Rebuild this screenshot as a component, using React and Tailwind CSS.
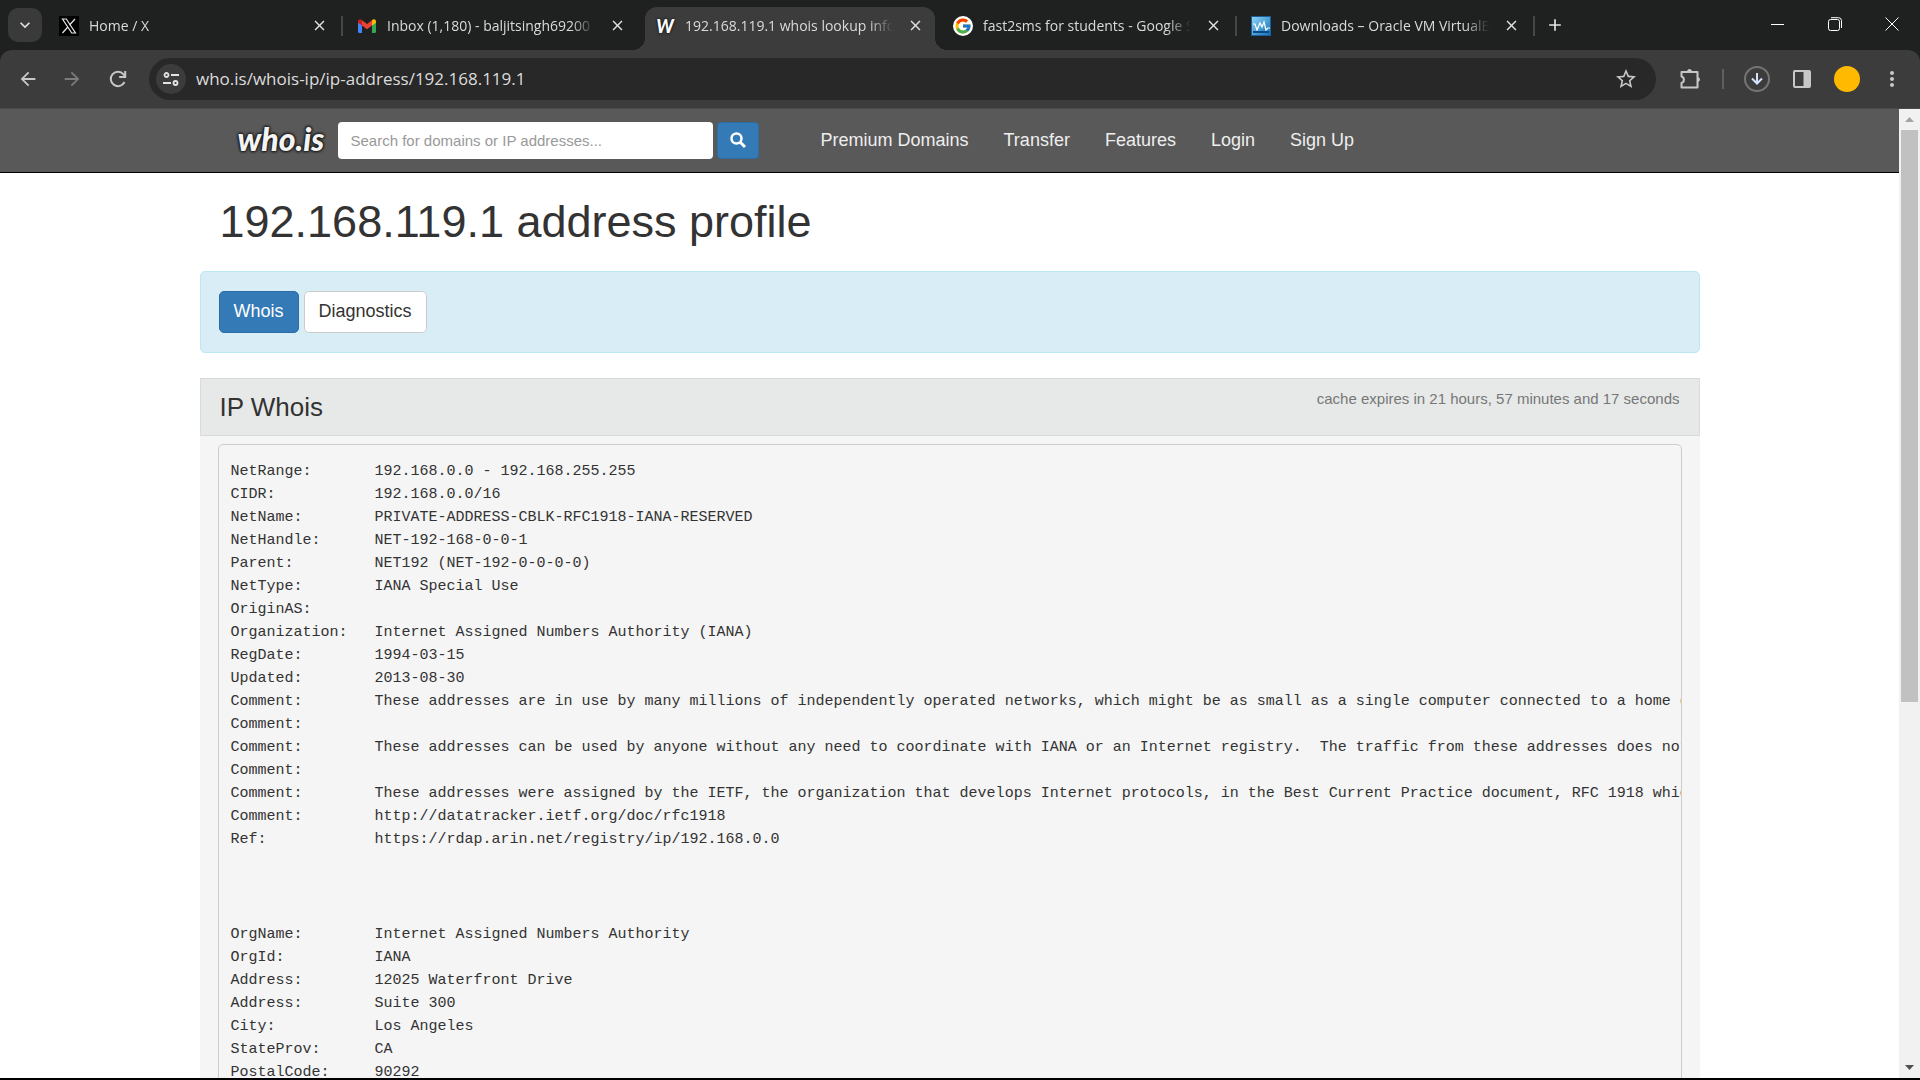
import React from "react";
import { FcGoogle } from "react-icons/fc";
import { MdArrowBack, MdArrowForward, MdRefresh, MdStarBorder, MdMoreVert, MdClose, MdAdd, MdKeyboardArrowDown } from "react-icons/md";

const XIcon = () => (
  <svg viewBox="0 0 20 20" className="size-5 shrink-0">
    <rect width="20" height="20" fill="#000" />
    <path d="M3.5 3h3.8l9.2 14h-3.8z" fill="none" stroke="#e7e7e7" strokeWidth="1.2" />
    <path d="M16 3l-5.5 6M8.8 11L3.5 17" stroke="#e7e7e7" strokeWidth="1.2" />
  </svg>
);

const GmailIcon = () => (
  <svg viewBox="0 0 20 20" className="size-5 shrink-0">
    <path d="M1 5v10.500a1.500 1.500 0 0 0 1.500 1.500H5V8z" fill="#4285f4" />
    <path d="M19 5v10.500a1.500 1.500 0 0 1-1.500 1.500H15V8z" fill="#34a853" />
    <path d="M15 4.200c1.600-1.600 4-.8 4 1.500v1L15 9.600z" fill="#fbbc04" />
    <path d="M5 4.200C3.400 2.600 1 3.400 1 5.700v1L5 9.600z" fill="#c5221f" />
    <path d="M5 4.200l5 3.800 5-3.800v5.200l-5 3.800-5-3.800z" fill="#ea4335" />
  </svg>
);

const WIcon = () => (
  <span className="flex size-5 shrink-0 items-center justify-center font-[Lato] text-lg font-black italic text-white [text-shadow:0_0_3px_#000]">W</span>
);

const GoogleIcon = () => (
  <span className="flex size-5 shrink-0 items-center justify-center rounded-full bg-white"><FcGoogle size={18} /></span>
);

const MonitorIcon = () => (
  <svg viewBox="0 0 20 20" className="size-5 shrink-0">
    <defs><linearGradient id="mon" x1="0" y1="0" x2="1" y2="1"><stop offset="0" stopColor="#8fd3f5" /><stop offset="1" stopColor="#1272b8" /></linearGradient></defs>
    <rect width="20" height="20" fill="#1b5f96" />
    <rect x="1" y="1" width="18" height="18" fill="url(#mon)" />
    <path d="M2 8h2l2 6 3-7 2 4 2-5 2 8 2-2h2" fill="none" stroke="#fff" strokeWidth="1.200" />
    <path d="M2 16h16" stroke="#0b4a86" strokeWidth="2" />
  </svg>
);

const tabs = [
  { title: "Home / X", Icon: XIcon },
  { title: "Inbox (1,180) - baljitsingh69200", Icon: GmailIcon },
  { title: "192.168.119.1 whois lookup info", Icon: WIcon, active: true },
  { title: "fast2sms for students - Google S", Icon: GoogleIcon },
  { title: "Downloads – Oracle VM VirtualB", Icon: MonitorIcon },
];

function Tab({ title, Icon, active, divider }) {
  return (
    <div className={`relative flex h-[43px] w-[290px] shrink-0 items-center self-end pb-1.5 pl-2.5 pr-2 ${active ? "rounded-t-xl bg-[#3c3c3c]" : ""}`}>
      {active && (
        <>
          <span className="absolute -left-3 bottom-0 size-3 bg-[radial-gradient(circle_at_0_0,transparent_12px,#3c3c3c_12px)]" />
          <span className="absolute -right-3 bottom-0 size-3 bg-[radial-gradient(circle_at_100%_0,transparent_12px,#3c3c3c_12px)]" />
        </>
      )}
      <Icon />
      <span className="ml-2.5 w-[210px] overflow-hidden whitespace-nowrap text-sm text-[#dadada] [mask-image:linear-gradient(to_right,#000_184px,transparent_208px)]">{title}</span>
      <button aria-label={`Close ${title}`} className="ml-2.5 flex size-5 items-center justify-center text-[#e3e3e3]"><MdClose size={17} /></button>
      {divider && <span className="absolute -right-1 h-5 w-0.5 bg-[#474747]" />}
    </div>
  );
}

function TabStrip() {
  return (
    <div className="flex h-[50px] bg-[#1f2120]">
      <button aria-label="Search tabs" className="ml-2 mt-2 flex size-[34px] shrink-0 items-center justify-center rounded-[10px] bg-[#3a3a3a] text-[#e3e3e3]"><MdKeyboardArrowDown size={20} /></button>
      <div className="ml-[7px] flex min-w-0 gap-2">
        {tabs.map((t, i) => <Tab key={t.title} {...t} divider={i !== 1 && i !== 2} />)}
      </div>
      <button aria-label="New tab" className="ml-3 flex w-6 items-center justify-center text-[#e3e3e3]"><MdAdd size={20} /></button>
      <div className="ml-auto flex pb-0.5 text-white">
        <button aria-label="Minimize" className="flex w-[57px] items-center justify-center"><svg width="13" height="13" viewBox="0 0 13 13"><path d="M0 6.500h13" stroke="currentColor" /></svg></button>
        <button aria-label="Restore" className="flex w-[57px] items-center justify-center"><svg width="14" height="14" viewBox="0 0 14 14" fill="none" stroke="currentColor"><rect x=".5" y="2.500" width="11" height="11" rx="2" /><path d="M3 .7h7.500a3 3 0 0 1 3 3V11" /></svg></button>
        <button aria-label="Close" className="flex w-[57px] items-center justify-center"><svg width="14" height="14" viewBox="0 0 14 14"><path d="M.5.5l13 13M13.500.5l-13 13" stroke="currentColor" /></svg></button>
      </div>
    </div>
  );
}

function Toolbar() {
  return (
    <div className="bg-[#1f2120]">
      <div className="flex h-[59px] items-center rounded-t-xl border-b border-[#4a4a4a] bg-[#3c3c3c] text-[#c7c7c7]">
        <button aria-label="Back" className="ml-4 flex w-6 justify-center"><MdArrowBack size={22} /></button>
        <button aria-label="Forward" className="ml-5 flex w-6 justify-center text-[#7b7b7b]"><MdArrowForward size={22} /></button>
        <button aria-label="Reload" className="ml-[22px] flex w-6 justify-center">
          <svg width="20" height="20" viewBox="0 0 20 20" fill="none" stroke="currentColor" strokeWidth="2"><path d="M16.500 13A7.200 7.200 0 1 1 15.500 5.300L17 7.500" /><path d="M17.200 2v6h-6" /></svg>
        </button>
        <div className="ml-[19px] flex h-[42px] flex-1 items-center rounded-full bg-[#282828] pl-[7px] pr-[18px]">
          <button aria-label="View site information" className="flex size-[30px] items-center justify-center rounded-full bg-[#3c3c3c]">
            <svg width="16" height="16" viewBox="0 0 16 16" fill="none" stroke="#e3e3e3" strokeWidth="1.800"><circle cx="3.500" cy="4" r="2" /><path d="M8 4h8M0 12h8" /><circle cx="12.500" cy="12" r="2" /></svg>
          </button>
          <input aria-label="Address" defaultValue="who.is/whois-ip/ip-address/192.168.119.1" className="ml-2.5 min-w-0 flex-1 bg-transparent text-[17px] text-[#dcdcdc] outline-none" />
          <button aria-label="Bookmark this tab"><MdStarBorder size={24} /></button>
        </div>
        <button aria-label="Extensions" className="ml-[22px] flex w-6 justify-center">
          <svg width="24" height="24" viewBox="0 0 24 24" fill="none" stroke="currentColor" strokeWidth="2" strokeLinejoin="round"><path d="M3.500 5h16v15.500h-16v-4.500c3.200-1 3.200-5.500 0-6.500z" /><path d="M9.500 4.500a2 2 0 0 1 4 0zM19.500 10.500a2 2 0 0 1 0 4z" fill="currentColor" strokeWidth="1" /></svg>
        </button>
        <span className="ml-5 h-5 w-0.5 bg-[#5f5f5f]" />
        <button aria-label="Downloads" className="ml-5 flex size-[26px] items-center justify-center rounded-full border-2 border-[#757575] text-[#d3e3fd]">
          <svg width="14" height="14" viewBox="0 0 14 14" fill="none" stroke="currentColor" strokeWidth="2"><path d="M7 1v10M2 6.500l5 5 5-5" /></svg>
        </button>
        <button aria-label="Side panel" className="ml-5 flex w-6 justify-center"><svg width="20" height="20" viewBox="0 0 20 20"><rect x="2" y="2" width="16" height="16" rx="1" fill="none" stroke="currentColor" strokeWidth="2" /><path d="M11.500 2H18v16h-6.500z" fill="currentColor" /></svg></button>
        <button aria-label="Profile" className="ml-5 size-[26px] rounded-full bg-[#ffb900]" />
        <button aria-label="Menu" className="ml-5 mr-4 flex w-6 justify-center"><MdMoreVert size={26} /></button>
      </div>
    </div>
  );
}

function SiteHeader() {
  return (
    <header className="border-b border-black bg-[#595959]">
      <div className="mx-auto flex h-[63px] max-w-[1500px] items-center pl-[38px]">
        <a href="#home" className="w-[100px] pb-1 font-[Lato] text-[32px] leading-8 font-black text-[#f4f4f4] italic [text-shadow:0_0_3px_#111,0_0_3px_#111,0_0_3px_#111]">who.is</a>
        <input aria-label="Search" placeholder="Search for domains or IP addresses..." className="h-[37px] w-[375px] rounded-sm bg-white px-[13px] text-[15px] placeholder:text-[#999]" />
        <button aria-label="Submit search" className="ml-1 flex h-[37px] w-[42px] items-center justify-center rounded-sm border border-[#2e6da4] bg-[#337ab7] pb-0.5 text-white">
          <svg width="18" height="18" viewBox="0 0 18 18" fill="none" stroke="currentColor"><circle cx="7.500" cy="7.500" r="5" strokeWidth="2.500" /><path d="M11 11l5 5" strokeWidth="3" /></svg>
        </button>
        <nav className="ml-[62px] flex gap-[35px] pb-px text-lg text-[#eee]">
          {["Premium Domains", "Transfer", "Features", "Login", "Sign Up"].map((l) => <a key={l} href="#nav">{l}</a>)}
        </nav>
      </div>
    </header>
  );
}

const network = `NetRange:       192.168.0.0 - 192.168.255.255
CIDR:           192.168.0.0/16
NetName:        PRIVATE-ADDRESS-CBLK-RFC1918-IANA-RESERVED
NetHandle:      NET-192-168-0-0-1
Parent:         NET192 (NET-192-0-0-0-0)
NetType:        IANA Special Use
OriginAS:
Organization:   Internet Assigned Numbers Authority (IANA)
RegDate:        1994-03-15
Updated:        2013-08-30
Comment:        These addresses are in use by many millions of independently operated networks, which might be as small as a single computer connected to a home ga
Comment:
Comment:        These addresses can be used by anyone without any need to coordinate with IANA or an Internet registry.  The traffic from these addresses does not
Comment:
Comment:        These addresses were assigned by the IETF, the organization that develops Internet protocols, in the Best Current Practice document, RFC 1918 which
Comment:        http://datatracker.ietf.org/doc/rfc1918
Ref:            https://rdap.arin.net/registry/ip/192.168.0.0`;

const organization = `OrgName:        Internet Assigned Numbers Authority
OrgId:          IANA
Address:        12025 Waterfront Drive
Address:        Suite 300
City:           Los Angeles
StateProv:      CA
PostalCode:     90292`;

export default function App() {
  return (
    <div className="flex h-screen flex-col overflow-hidden border-b-2 border-black bg-white font-['Open_Sans',sans-serif]">
      <TabStrip />
      <Toolbar />
      <div className="flex min-h-0 flex-1 font-['Liberation_Sans',Arial,sans-serif] text-[#333]">
        <div className="min-w-0 flex-1 overflow-hidden">
          <SiteHeader />
          <main className="mx-auto max-w-[1500px]">
            <h1 className="px-5 pt-6 pb-[25px] text-[45px] leading-[49px]">192.168.119.1 address profile</h1>
            <div className="flex h-[82px] gap-[5px] rounded-[5px] border border-[#bce8f1] bg-[#d9edf7] px-[18px] pt-[19px]">
              <button className="h-[42px] rounded-[5px] border border-[#2e6da4] bg-[#337ab7] px-3.5 pb-0.5 text-lg text-white">Whois</button>
              <button className="h-[42px] rounded-[5px] border border-[#ccc] bg-white px-3.5 pb-0.5 text-lg">Diagnostics</button>
            </div>
            <section className="mt-[25px] bg-[#f5f5f5] pb-5">
              <div className="flex h-[58px] justify-between border border-[#d9dbda] bg-[#e7e9e8] px-[19px]">
                <h2 className="text-[26px] leading-[56px]">IP Whois</h2>
                <span className="pt-[9px] text-[15px] leading-[21px] text-[#777]">cache expires in 21 hours, 57 minutes and 17 seconds</span>
              </div>
              <div className="mx-[18px] mt-2 overflow-hidden rounded-[5px] border border-[#ccc] bg-[#f5f5f5] px-3 py-[15px] font-['Liberation_Mono',monospace] text-[15px] leading-[23px]">
                <pre className="font-[inherit]">{network}</pre>
                <pre className="mt-[72px] font-[inherit]">{organization}</pre>
              </div>
            </section>
          </main>
        </div>
        <div className="flex w-[21px] flex-col items-center bg-[#f1f1f1]">
          <svg width="21" height="21" viewBox="0 0 21 21"><path d="M6 13l4.500-5 4.500 5z" fill="#a3a3a3" /></svg>
          <div className="h-[572px] w-[17px] bg-[#c1c1c1]" />
          <svg className="mt-auto" width="21" height="21" viewBox="0 0 21 21"><path d="M6 8l4.500 5L15 8z" fill="#505050" /></svg>
        </div>
      </div>
    </div>
  );
}
